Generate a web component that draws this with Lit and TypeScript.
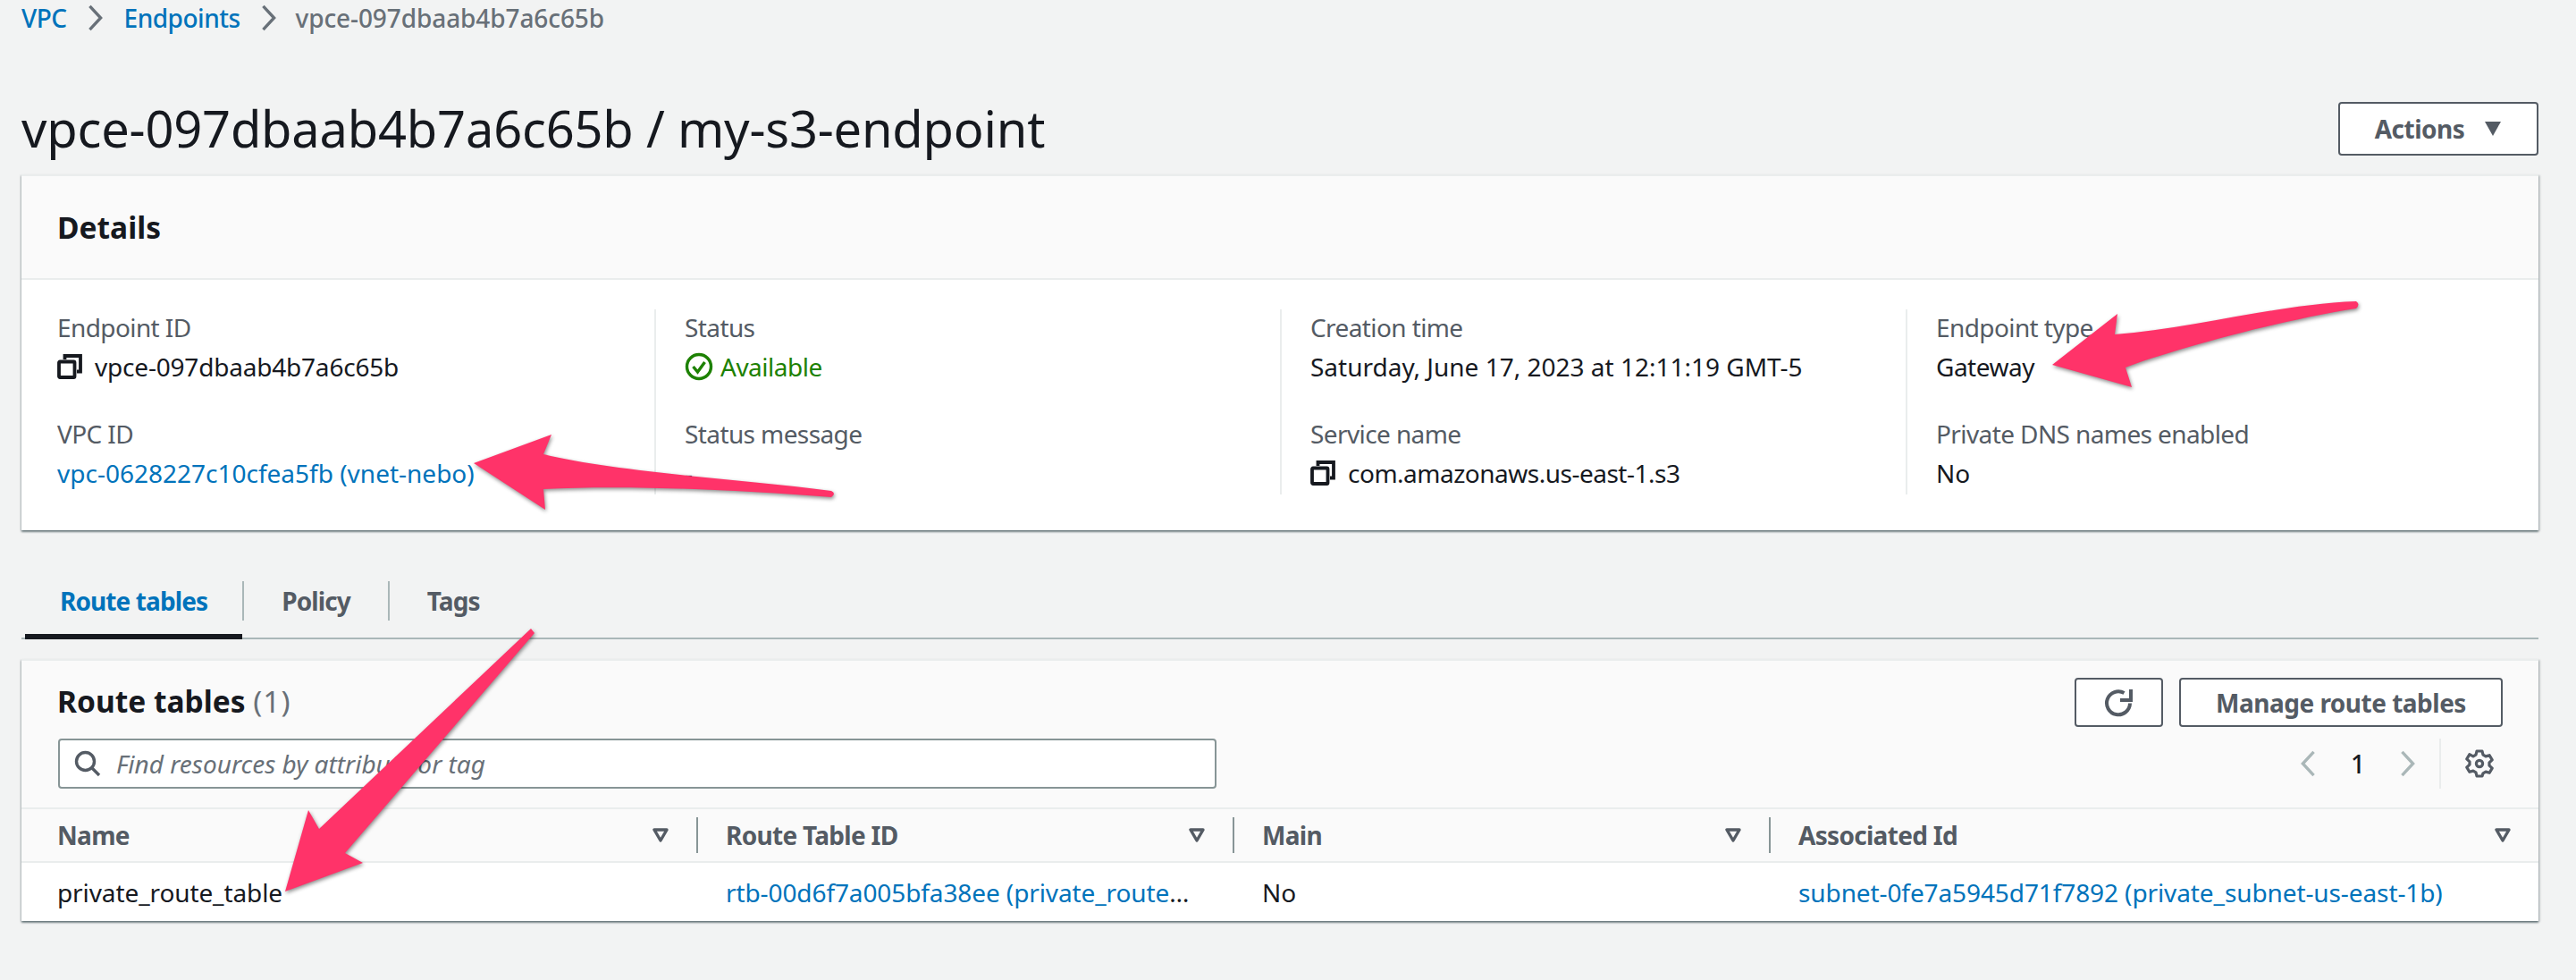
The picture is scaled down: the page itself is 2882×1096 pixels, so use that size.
import {LitElement, html, css, svg} from 'lit';
import {customElement} from 'lit/decorators.js';

const copyIcon = html`<svg class="copy" viewBox="0 0 28 28" fill="none" stroke="#16191f" stroke-width="3.8"><rect x="2" y="8.5" width="17.5" height="17.5" rx="1"/><path d="M8.5 6V2H26v17.5h-4"/></svg>`;

const filterIcon = html`<svg class="filter" viewBox="0 0 18 16" fill="none" stroke="#545b64" stroke-width="3.4" stroke-linejoin="round"><path d="M2 2h14L9 14z"/></svg>`;

const chevron = (stroke: string, flip = false) => html`<svg class="chev ${flip ? 'flip' : ''}" viewBox="0 0 18 32" fill="none" stroke=${stroke} stroke-width="3.6"><path d="M2 2l13 14L2 30"/></svg>`;

@customElement('app-root')
export class AppRoot extends LitElement {
    static styles = css`
        :host {
            display: block;
            position: relative;
            height: 1096px;
            overflow: hidden;
            background: #f2f3f3;
            color: #16191f;
            font-family: "Noto Sans", sans-serif;
            font-size: 28px;
            line-height: 44px;
        }

        a {
            color: #0073bb;
            text-decoration: none;
        }

        .page {
            padding: 0 42px 0 24px;
        }

        .crumbs {
            display: flex;
            align-items: center;
            height: 40px;
            gap: 23px;
            color: #687078;
            font-weight: 500;
        }

        .crumbs a {
            letter-spacing: -.5px;
        }

        .crumbs span {
            margin-left: -2px;
            letter-spacing: -.1px;
        }

        .chev {
            width: 18px;
            height: 30px;
            flex: none;
        }

        .flip {
            transform: scaleX(-1);
        }

        .head {
            display: flex;
            align-items: center;
            justify-content: space-between;
            height: 60px;
            margin: 74px 0 21px;
        }

        h1 {
            margin: -3px 0 0;
            font-size: 56px;
            font-weight: 400;
            line-height: 60px;
            letter-spacing: -.2px;
        }

        .btn {
            display: flex;
            align-items: center;
            justify-content: center;
            box-sizing: border-box;
            border: 2px solid #545b64;
            border-radius: 4px;
            background: #fff;
            color: #545b64;
            font-size: 28px;
            font-weight: 700;
            letter-spacing: -.5px;
        }

        .actions {
            width: 224px;
            height: 60px;
            gap: 22px;
        }

        .caret {
            width: 20px;
            height: 16px;
        }

        .card {
            background: #fff;
            box-shadow: 0 2px 2px rgba(0, 28, 36, .45), 2px 1px 2px rgba(0, 28, 36, .15), -1px 1px 2px rgba(0, 28, 36, .15);
            border-top: 2px solid #eaeded;
        }

        .details-head {
            box-sizing: border-box;
            height: 116px;
            padding-left: 40px;
            display: flex;
            align-items: center;
            background: #fafafa;
            border-bottom: 2px solid #eaeded;
            font-size: 33.5px;
            font-weight: 700;
        }

        .details-body {
            display: grid;
            grid-template-columns: repeat(4, 1fr);
            padding: 33px 8px 40px;
        }

        .col {
            display: flex;
            flex-direction: column;
            gap: 31px;
            padding-left: 32px;
            border-left: 2px solid #eaeded;
        }

        .col:first-child {
            padding-left: 32px;
            border-left: none;
        }

        .col > div {
            position: relative;
            top: -2px;
        }

        .label {
            color: #545b64;
            letter-spacing: -.6px;
        }

        .value {
            display: flex;
            align-items: center;
            gap: 14px;
        }

        .tight {
            letter-spacing: -.2px;
        }

        .tighter {
            letter-spacing: -.5px;
        }

        .copy {
            width: 28px;
            height: 28px;
            flex: none;
        }

        .ok {
            color: #1d8102;
            gap: 8px;
            letter-spacing: -.5px;
        }

        .ok svg {
            width: 32px;
            height: 32px;
        }

        .tabs {
            display: flex;
            height: 68px;
            margin-top: 52px;
            padding: 0 0 0 4px;
            border-bottom: 2px solid #aab7b8;
            font-weight: 700;
            color: #545b64;
            letter-spacing: -.9px;
        }

        .tab {
            position: relative;
            box-sizing: border-box;
            height: 44px;
            margin-top: 5px;
            padding: 0 42px;
            border-left: 2px solid #aab7b8;
        }

        .tab:first-child {
            padding: 0 39px;
            border-left: none;
            color: #0073bb;
        }

        .tab:first-child::after {
            content: "";
            position: absolute;
            left: 0;
            right: 0;
            top: 59px;
            height: 6px;
            background: #16191f;
        }

        .routes {
            margin-top: 22px;
        }

        .routes-head {
            display: grid;
            grid-template-columns: 1fr auto;
            grid-template-rows: 55px 56px;
            row-gap: 13px;
            padding: 19px 40px 21px 41px;
            background: #fafafa;
        }

        .title {
            align-self: center;
            margin: -3px 0 0 -1px;
            font-size: 33.5px;
            font-weight: 700;
            line-height: 44px;
        }

        .title span {
            color: #687078;
            font-weight: 400;
            letter-spacing: 1px;
        }

        .buttons {
            display: flex;
            justify-content: flex-end;
            gap: 18px;
        }

        .refresh {
            width: 99px;
        }

        .refresh svg {
            width: 34px;
            height: 34px;
        }

        .manage {
            width: 362px;
        }

        .search {
            display: flex;
            align-items: center;
            gap: 17px;
            box-sizing: border-box;
            width: 1296px;
            padding-left: 16px;
            border: 2px solid #879596;
            border-radius: 4px;
            background: #fff;
            color: #687078;
            font-style: italic;
        }

        .search svg {
            width: 30px;
            height: 30px;
            flex: none;
        }

        .pager {
            display: flex;
            align-items: center;
            justify-content: flex-end;
        }

        .pager .chev {
            margin: 0 2px;
        }

        .num {
            width: 90px;
            text-align: center;
            font-weight: 500;
        }

        .gear-wrap {
            display: flex;
            align-items: center;
            justify-content: center;
            height: 56px;
            width: 86px;
            margin-left: 24px;
            margin-right: -17px;
            border-left: 2px solid #eaeded;
        }

        .gear-wrap svg {
            width: 32px;
            height: 32px;
        }

        .row {
            display: grid;
            grid-template-columns: 755px 600px 600px 1fr;
            align-items: center;
        }

        .thead {
            box-sizing: border-box;
            height: 62px;
            background: #fafafa;
            border-top: 2px solid #eaeded;
            border-bottom: 2px solid #eaeded;
            color: #545b64;
            font-weight: 700;
            letter-spacing: -.7px;
        }

        .th {
            display: flex;
            align-items: center;
            justify-content: space-between;
            box-sizing: border-box;
            height: 40px;
            padding: 0 31px;
            border-left: 2px solid #879596;
        }

        .th:first-child {
            padding-left: 40px;
            border-left: none;
        }

        .filter {
            width: 18px;
            height: 16px;
            flex: none;
        }

        .tbody {
            height: 65px;
            letter-spacing: -.1px;
        }

        .td {
            box-sizing: border-box;
            padding: 0 40px 0 33px;
            white-space: nowrap;
            overflow: hidden;
            text-overflow: ellipsis;
        }

        .td:first-child {
            padding-left: 40px;
        }

        .marks {
            position: absolute;
            left: 0;
            top: 0;
            width: 2882px;
            height: 1096px;
            pointer-events: none;
            filter: drop-shadow(1px 2px 2px rgba(0, 0, 0, .45));
        }
    `;

    render() {
        return html`
        <div class="page">
            <nav class="crumbs">
                <a>VPC</a>${chevron('#687078')}
                <a>Endpoints</a>${chevron('#687078')}
                <span>vpce-097dbaab4b7a6c65b</span>
            </nav>
            <div class="head">
                <h1>vpce-097dbaab4b7a6c65b / my-s3-endpoint</h1>
                <div class="btn actions">Actions
                    <svg class="caret" viewBox="0 0 20 16" fill="#545b64"><path d="M1 0h18L10 16z"/></svg>
                </div>
            </div>

            <section class="card">
                <div class="details-head">Details</div>
                <div class="details-body">
                    <div class="col">
                        <div><div class="label">Endpoint ID</div><div class="value tight">${copyIcon}vpce-097dbaab4b7a6c65b</div></div>
                        <div><div class="label">VPC ID</div><div class="value"><a>vpc-0628227c10cfea5fb (vnet-nebo)</a></div></div>
                    </div>
                    <div class="col">
                        <div><div class="label">Status</div>
                            <div class="value ok">
                                <svg viewBox="0 0 32 32" fill="none" stroke="#1d8102" stroke-width="3.4"><circle cx="16" cy="16" r="13.5"/><path d="M9.5 16l5 6 8-11"/></svg>
                                Available
                            </div>
                        </div>
                        <div><div class="label">Status message</div><div class="value">-</div></div>
                    </div>
                    <div class="col">
                        <div><div class="label">Creation time</div><div class="value">Saturday, June 17, 2023 at 12:11:19 GMT-5</div></div>
                        <div><div class="label">Service name</div><div class="value tighter">${copyIcon}com.amazonaws.us-east-1.s3</div></div>
                    </div>
                    <div class="col">
                        <div><div class="label">Endpoint type</div><div class="value tighter">Gateway</div></div>
                        <div><div class="label">Private DNS names enabled</div><div class="value">No</div></div>
                    </div>
                </div>
            </section>

            <div class="tabs">
                <div class="tab">Route tables</div>
                <div class="tab">Policy</div>
                <div class="tab">Tags</div>
            </div>

            <section class="card routes">
                <div class="routes-head">
                    <div class="title">Route tables <span>(1)</span></div>
                    <div class="buttons">
                        <div class="btn refresh">
                            <svg viewBox="0 0 34 34" fill="none" stroke="#545b64" stroke-width="4"><path d="M29 17.5A13 13 0 1 1 22.5 6"/><path d="M30 2v12H18" /></svg>
                        </div>
                        <div class="btn manage">Manage route tables</div>
                    </div>
                    <div class="search">
                        <svg viewBox="0 0 30 30" fill="none" stroke="#545b64" stroke-width="3.4"><circle cx="12.5" cy="12.5" r="10"/><path d="M20 20l8 8"/></svg>
                        Find resources by attribute or tag
                    </div>
                    <div class="pager">
                        ${chevron('#aab7b8', true)}
                        <span class="num">1</span>
                        ${chevron('#aab7b8')}
                        <div class="gear-wrap">
                            <svg viewBox="0 0 32 32" fill="none" stroke="#545b64" stroke-width="3.2" stroke-linejoin="round"><path d="M13 2h6l1 4.2 3 1.7 4.2-1.2 3 5.2-3.2 3v3.2l3.2 3-3 5.2-4.2-1.2-3 1.7L19 30h-6l-1-4.2-3-1.7-4.2 1.2-3-5.2 3.2-3v-3.2l-3.2-3 3-5.2L9 7.9l3-1.7z"/><circle cx="16" cy="16" r="3.6"/></svg>
                        </div>
                    </div>
                </div>
                <div class="row thead">
                    <div class="th">Name${filterIcon}</div>
                    <div class="th">Route Table ID${filterIcon}</div>
                    <div class="th">Main${filterIcon}</div>
                    <div class="th">Associated Id${filterIcon}</div>
                </div>
                <div class="row tbody">
                    <div class="td">private_route_table</div>
                    <div class="td"><a>rtb-00d6f7a005bfa38ee (private_route_table)</a></div>
                    <div class="td">No</div>
                    <div class="td"><a>subnet-0fe7a5945d71f7892 (private_subnet-us-east-1b)</a></div>
                </div>
            </section>
        </div>

        <svg class="marks" viewBox="0 0 2882 1096" fill="#ff3369">
            ${svg`<path d="M530 518 617 486 608 508C690 528 830 536 930 549Q936 552 930 556C830 548 700 542 608 547L610 570Z"/>`}
            ${svg`<path d="M2296 408 2369 351 2366 374C2450 368 2550 340 2636 337Q2641 340 2636 345C2540 360 2420 395 2378 411L2385 433Z"/>`}
            ${svg`<path d="M594 703 598 708 386 954 406 965 319 997 345 906 357 927Z"/>`}
        </svg>
        `;
    }
}
